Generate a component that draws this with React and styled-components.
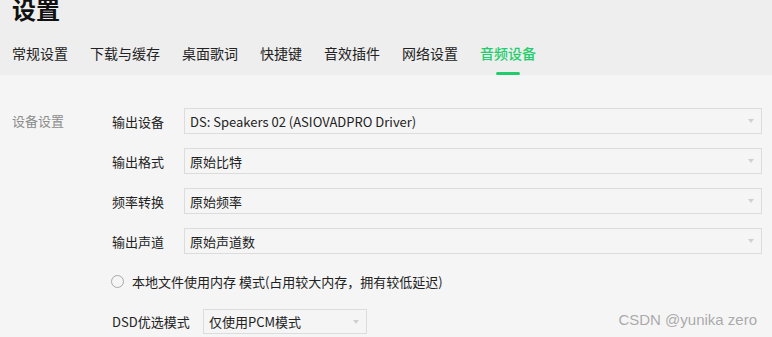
import React from 'react'
import styled, {createGlobalStyle} from 'styled-components'

const GlobalStyle = createGlobalStyle`
  html, body {
    margin: 0;
    padding: 0;
    background: #f5f5f5;
    font-family: "Noto Sans CJK SC", "Noto Sans", sans-serif;
    color: #333;
    overflow: hidden;
  }
`

const Page = styled.div`
  position: relative;
  width: 772px;
  height: 337px;
  overflow: hidden;
`

const Header = styled.div`
  display: flow-root;
  background: #eeeeee;
  padding: 0 12px;
  height: 75px;
  box-sizing: border-box;
`

const Title = styled.h1`
  margin: -7px 0 0;
  font-size: 24px;
  line-height: 32px;
  font-weight: 700;
  color: #111;
`

const Tabs = styled.div`
  display: flex;
  gap: 22px;
  margin-top: 18px;
`

const Tab = styled.div`
  position: relative;
  font-size: 14px;
  line-height: 20px;
  padding-bottom: 12px;
  color: ${p => (p.$active ? '#1fcd6c' : '#222')};
  font-weight: ${p => (p.$active ? 500 : 400)};

  &::after {
    content: '';
    display: ${p => (p.$active ? 'block' : 'none')};
    position: absolute;
    left: 50%;
    bottom: 0;
    width: 24px;
    height: 3px;
    margin-left: -12px;
    border-radius: 2px;
    background: #1fcd6c;
  }
`

const Content = styled.div`
  display: flex;
  padding: 33px 10px 0 12px;
`

const SectionTitle = styled.div`
  width: 100px;
  flex: none;
  font-size: 13px;
  line-height: 26px;
  color: #8c8c8c;
`

const Form = styled.div`
  flex: 1;
  display: flex;
  flex-direction: column;
  gap: 14px;
`

const Row = styled.div`
  display: flex;
  align-items: center;
`

const Label = styled.div`
  width: ${p => p.$width || 72}px;
  flex: none;
  font-size: 13px;
  color: #222;
`

const Select = styled.div`
  position: relative;
  display: flex;
  align-items: center;
  box-sizing: border-box;
  height: ${p => p.$height || 26}px;
  width: ${p => (p.$width ? `${p.$width}px` : 'auto')};
  flex: ${p => (p.$width ? 'none' : '1')};
  border: 1px solid #dcdcdc;
  background: #f5f5f5;
  padding: 0 5px;
  font-size: 13px;
  color: #222;

  &::after {
    content: '';
    position: absolute;
    right: 7px;
    top: 50%;
    margin-top: -2px;
    border-left: 3.5px solid transparent;
    border-right: 3.5px solid transparent;
    border-top: 4px solid #cfcfcf;
  }
`

const RadioRow = styled.div`
  display: flex;
  align-items: center;
  gap: 8px;
  margin: 4px 0 0 -1px;
  font-size: 13px;
  color: #222;
`

const Radio = styled.span`
  width: 13px;
  height: 13px;
  box-sizing: border-box;
  border-radius: 50%;
  border: 1px solid #a8a8a8;
  flex: none;
`

const DsdRow = styled(Row)`
  margin-top: 4px;
`

const Watermark = styled.div`
  position: absolute;
  right: 15px;
  bottom: 9px;
  font-family: "Liberation Sans", Arial, sans-serif;
  font-size: 15px;
  color: #a9a9a9;
  text-shadow: 0 0 1px #fff;
`

const tabs = ['常规设置', '下载与缓存', '桌面歌词', '快捷键', '音效插件', '网络设置', '音频设备']

const rows = [
  ['输出设备', 'DS: Speakers 02 (ASIOVADPRO Driver)'],
  ['输出格式', '原始比特'],
  ['频率转换', '原始频率'],
  ['输出声道', '原始声道数'],
]

export default function App() {
  return (
    <Page>
      <GlobalStyle />
      <Header>
        <Title>设置</Title>
        <Tabs>
          {tabs.map(t => (
            <Tab key={t} $active={t === '音频设备'}>{t}</Tab>
          ))}
        </Tabs>
      </Header>
      <Content>
        <SectionTitle>设备设置</SectionTitle>
        <Form>
          {rows.map(([label, value]) => (
            <Row key={label}>
              <Label>{label}</Label>
              <Select>{value}</Select>
            </Row>
          ))}
          <RadioRow>
            <Radio />
            本地文件使用内存 模式(占用较大内存，拥有较低延迟)
          </RadioRow>
          <DsdRow>
            <Label $width={91}>DSD优选模式</Label>
            <Select $width={164} $height={25}>仅使用PCM模式</Select>
          </DsdRow>
        </Form>
      </Content>
      <Watermark>CSDN @yunika zero</Watermark>
    </Page>
  )
}
